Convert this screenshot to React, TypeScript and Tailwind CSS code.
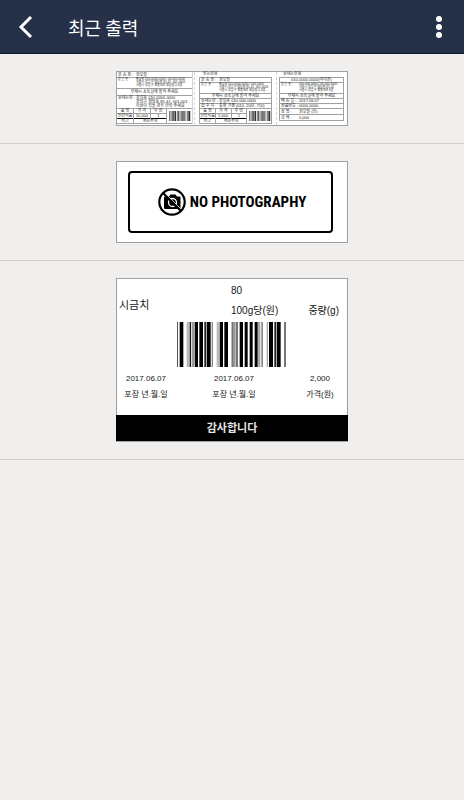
import type { ReactNode } from 'react';

// [x, width, shade] in thirds of a pixel
const BARS: [number, number, string][] = [
  [0, 3, '#555'], [8, 11, '#000'], [29, 8, '#bbb'], [38, 4, '#111'], [44, 7, '#999'],
  [53, 10, '#000'], [67, 11, '#000'], [82, 5, '#222'], [89, 12, '#000'], [104, 4, '#888'],
  [119, 7, '#bbb'], [128, 10, '#000'], [142, 11, '#000'], [164, 3, '#333'], [168, 8, '#999'],
  [178, 4, '#333'], [188, 10, '#000'], [203, 9, '#000'], [218, 9, '#000'], [233, 9, '#000'],
  [243, 7, '#aaa'], [253, 5, '#888'], [269, 4, '#aaa'], [276, 12, '#000'], [292, 5, '#222'],
  [299, 12, '#000'], [322, 4, '#333'],
];

function Barcode({ className }: { className: string }) {
  return (
    <svg className={className} viewBox="0 0 327 135" preserveAspectRatio="none" aria-label="바코드">
      {BARS.map(([x, width, fill]) => (
        <rect key={x} x={x} y="0" width={width} height="135" fill={fill} />
      ))}
    </svg>
  );
}

function NoCamera() {
  return (
    <svg className="h-7 w-7 shrink-0" viewBox="0 0 28 28" aria-hidden="true">
      <path d="M7 8.5h4l1.5-2h5l1.5 2h2.5q1 0 1 1v10.5q0 1-1 1H7q-1 0-1-1v-10.5q0-1 1-1Z" fill="#000" />
      <circle cx="14.5" cy="14.5" r="4" fill="#000" stroke="#fff" strokeWidth="1.3" />
      <path d="m5.8 4 18.2 18.2" stroke="#fff" strokeWidth="1" />
      <path d="m5 5 18 18" stroke="#000" strokeWidth="2.2" />
      <circle cx="14" cy="14" r="12.7" fill="none" stroke="#000" strokeWidth="2.2" />
    </svg>
  );
}

function Row({ className = 'h-[5px]', label, children }: { className?: string; label: string; children: ReactNode }) {
  return (
    <div className={`flex border-b border-neutral-400 px-px ${className}`}>
      <span className="w-[18px] shrink-0">{label}</span>
      <span>{children}</span>
    </div>
  );
}

function Notice({ className = 'h-[5px]', children }: { className?: string; children: ReactNode }) {
  return <p className={`border-b border-neutral-400 text-center ${className}`}>{children}</p>;
}

function PriceGrid({ price }: { price: string }) {
  return (
    <div className="flex items-center border-b border-neutral-400">
      <table className="w-[50px] table-fixed border-collapse text-center">
        <tbody>
          <tr className="border-b border-neutral-400">
            <td className="border-r border-neutral-400 p-0">품 명</td>
            <td className="border-r border-neutral-400 p-0">가 격</td>
            <td className="border-r border-neutral-400 p-0">수 량</td>
          </tr>
          <tr className="border-b border-black">
            <td className="border-r border-neutral-400 p-0">신선식품</td>
            <td className="border-r border-neutral-400 p-0">{price}</td>
            <td className="border-r border-neutral-400 p-0">1</td>
          </tr>
          <tr>
            <td className="border-r border-neutral-400 p-0">비고</td>
            <td colSpan={2} className="border-r border-neutral-400 p-0">취급주의</td>
          </tr>
        </tbody>
      </table>
      <Barcode className="ml-[2px] h-[10px] w-[22px] shrink-0" />
    </div>
  );
}

function ShippingLabel() {
  return (
    <div className="flex h-[55px] w-[232px] border border-neutral-400 bg-white font-['Liberation_Sans','Noto_Sans_CJK_KR',sans-serif] text-[4px] leading-[4px] whitespace-nowrap text-neutral-800">
      <div className="w-[78px] shrink-0 border-r border-dashed border-neutral-300 pr-px">
        <div className="border-r border-neutral-300">
          <Row className="h-[6px] items-center" label="운 송 장 :">권오철</Row>
          <Row className="h-[11px] text-[3px] leading-[3px]" label="받 는 분 :">
            홍길동 010-0000-0000 / 00-000-0000
            <br />
            서울시 강남구 청담동 85-41, 001-0001
            <br />
            서울시 강남구 영동대로 청담빌딩 8층
          </Row>
          <Notice className="h-[7px] pt-px">부재시 소독실에 맡겨 주세요</Notice>
          <Row className="h-[13px]" label="보내는분 :">
            홍길동 010-0000-0000
            <br />
            강남구 청담동 85-41, 001-001
            <br />
            이상이 있을 경우 연락 주세요
          </Row>
          <PriceGrid price="10,000" />
        </div>
      </div>
      <div className="w-[82px] shrink-0 border-r border-dashed border-neutral-300 px-1">
        <p className="h-[5px] px-1">받는분용</p>
        <div className="border border-b-0 border-neutral-400">
          <Row label="운 송 장 :">권오철</Row>
          <Row className="h-[11px] text-[3px] leading-[3px]" label="받 는 분 :">
            홍길동 010-0000-0000 / 000-0000
            <br />
            서울시 강남구 청담동 85-41, 001-0001
            <br />
            서울시 강남구 영동대로 청담빌딩 8층
          </Row>
          <Notice>부재시 소독실에 맡겨 주세요</Notice>
          <Row label="보내는분 :">홍길동 010-000-0000</Row>
          <Row label="접 수 지 :">충청 가평 (010, 20년, 710)</Row>
          <PriceGrid price="5,000" />
        </div>
      </div>
      <div className="min-w-0 flex-1 pr-[3px] pl-[2px]">
        <p className="h-[5px] px-1">보내는분용</p>
        <div className="border border-b-0 border-neutral-400">
          <Notice>010-0000-0000(아이폰)</Notice>
          <Row className="h-[11px] text-[3px] leading-[3px]" label="받 는 분 :">
            010-000-0000 / 00-000-0000
            <br />
            서울시 강남구 청담동 85-41
            <br />
            서울시 강남구 영동대로 8층
          </Row>
          <Notice>부재시 소독실에 맡겨 주세요</Notice>
          <Row label="배 송 일 :">2017.06.07</Row>
          <Row label="상품번호 :">0000-0000</Row>
          <Row className="h-[6px] items-center" label="성 명 :">권오철 (인)</Row>
          <Row className="h-[6px] items-center" label="금 액 :">5,000</Row>
        </div>
      </div>
    </div>
  );
}

function NoPhotoLabel() {
  return (
    <div className="h-[82px] w-[232px] border border-neutral-400 bg-white py-[9px] pr-[14px] pl-[11px]">
      <div className="flex h-[62px] items-center justify-center gap-1 rounded-[4px] border-2 border-black pl-[3px] font-['Roboto_Condensed','Noto_Sans_CJK_KR',sans-serif] text-[15px] font-bold whitespace-nowrap text-black">
        <NoCamera />
        NO PHOTOGRAPHY
      </div>
    </div>
  );
}

function PriceLabel() {
  return (
    <div className="flex h-[164px] w-[232px] flex-col border border-neutral-400 bg-white font-['Liberation_Sans','Noto_Sans_CJK_KR',sans-serif] text-neutral-900">
      <div className="grid h-[43px] grid-cols-[114px_1fr_auto] text-[10px] leading-4">
        <p className="px-[2px] pt-[18px] text-[11px]">시금치</p>
        <div>
          <p className="pt-1">80</p>
          <p className="pt-1">100g당(원)</p>
        </div>
        <p className="px-2 pt-6">중량(g)</p>
      </div>
      <Barcode className="ml-[60px] h-[45px] w-[109px]" />
      <div className="grid flex-1 grid-cols-[58px_118px_54px] content-start justify-items-center pt-1 text-[8px] leading-4">
        <span>2017.06.07</span>
        <span>2017.06.07</span>
        <span>2,000</span>
        <span>포장 년.월.일</span>
        <span>포장 년.월.일</span>
        <span>가격(원)</span>
      </div>
      <p className="-mx-px h-[26px] bg-black text-center text-[11px] leading-[26px] font-bold text-neutral-200">
        감사합니다
      </p>
    </div>
  );
}

export default function App() {
  return (
    <div className="min-h-screen bg-[#f0efee] font-['Noto_Sans_CJK_KR',sans-serif]">
      <header className="flex h-[54px] items-center border-b border-[#0f1930] bg-[#273049] text-white">
        <button type="button" aria-label="뒤로" className="ml-2 flex h-10 w-9 items-center justify-center">
          <svg className="h-6 w-4" viewBox="0 0 16 24" fill="none" stroke="currentColor" strokeWidth="3" aria-hidden="true">
            <path d="M13 2 3 12l10 10" />
          </svg>
        </button>
        <h1 className="ml-6 flex-1 text-[18px] leading-6">최근 출력</h1>
        <button type="button" aria-label="메뉴" className="mr-[22px] flex flex-col gap-[2px]">
          <span className="h-[6px] w-[6px] rounded-full bg-white" />
          <span className="h-[6px] w-[6px] rounded-full bg-white" />
          <span className="h-[6px] w-[6px] rounded-full bg-white" />
        </button>
      </header>
      <ul>
        <li className="flex justify-center border-b border-[#d0cfce] py-[17px]">
          <ShippingLabel />
        </li>
        <li className="flex justify-center border-b border-[#d0cfce] py-[17px]">
          <NoPhotoLabel />
        </li>
        <li className="flex justify-center border-b border-[#d0cfce] py-[17px]">
          <PriceLabel />
        </li>
      </ul>
    </div>
  );
}
